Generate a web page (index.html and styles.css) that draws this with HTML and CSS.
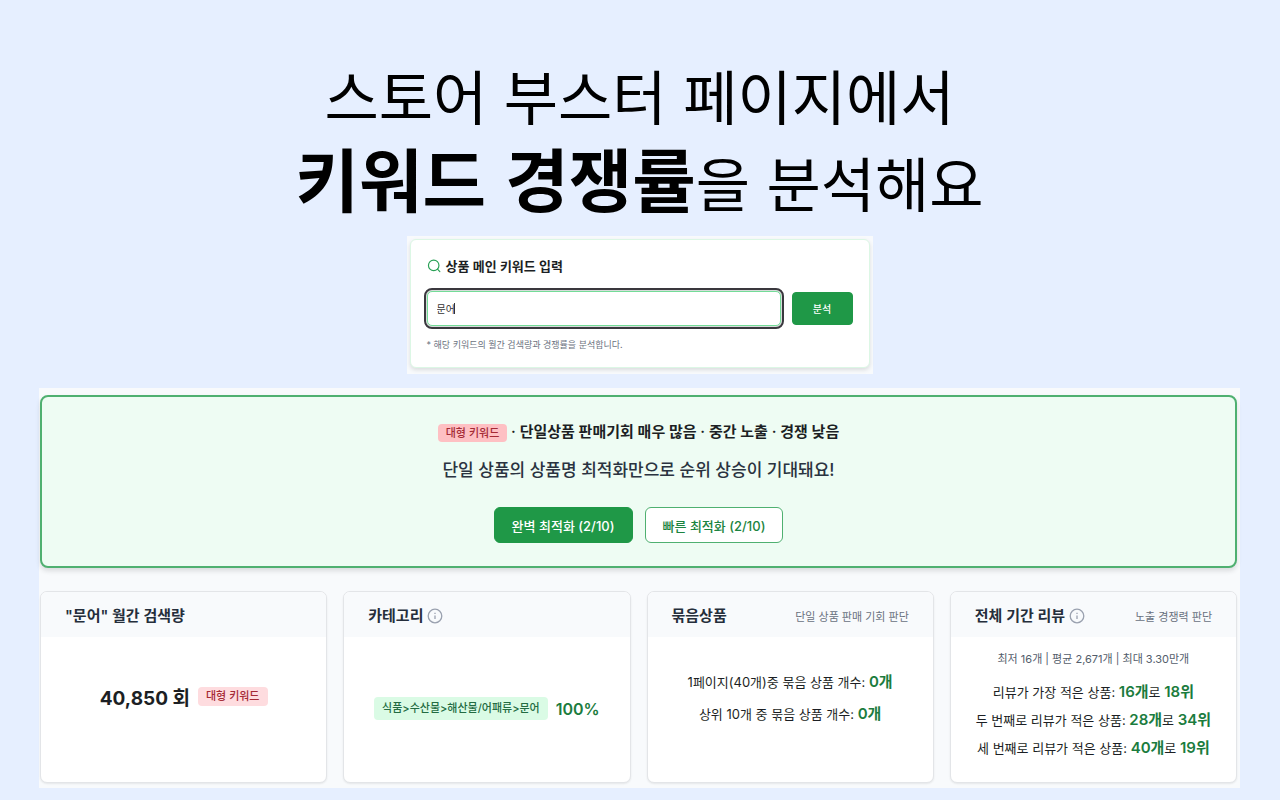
FILE: index.html
```html
<!DOCTYPE html>
<html lang="ko">
<head>
  <meta charset="UTF-8" />
  <title>스토어 부스터 - 키워드 경쟁률 분석</title>
  <meta name="viewport" content="width=device-width, initial-scale=1.0">
  <link rel="stylesheet" href="styles.css">
</head>
<body>

<h1 class="headline">스토어 부스터 페이지에서<br><strong>키워드 경쟁률</strong>을 분석해요</h1>

<div class="search-wrap">
  <form class="search-card">
    <label class="search-title" for="keyword">
      <svg class="search-icon" viewBox="0 0 24 24"><circle cx="11.5" cy="11" r="9"/><path d="M18 17.5 22 21.5"/></svg>
      상품 메인 키워드 입력
    </label>
    <div class="search-row">
      <div class="field">
        <input type="text" id="keyword" value="문어">
        <span class="caret"></span>
      </div>
      <button type="button" class="btn btn-search">분석</button>
    </div>
    <p class="hint">* 해당 키워드의 월간 검색량과 경쟁률을 분석합니다.</p>
  </form>
</div>

<main class="panel">
  <section class="summary">
    <p class="summary-title"><span class="badge badge-strong">대형 키워드</span> · 단일상품 판매기회 매우 많음 · 중간 노출 · 경쟁 낮음</p>
    <p class="summary-text">단일 상품의 상품명 최적화만으로 순위 상승이 기대돼요!</p>
    <div class="actions">
      <button type="button" class="btn">완벽 최적화 (2/10)</button>
      <button type="button" class="btn btn-outline">빠른 최적화 (2/10)</button>
    </div>
  </section>

  <div class="grid">
    <section class="card">
      <div class="card-head"><h2>"문어" 월간 검색량</h2></div>
      <div class="card-body row">
        <strong class="volume">40,850 회</strong>
        <span class="badge">대형 키워드</span>
      </div>
    </section>

    <section class="card">
      <div class="card-head">
        <h2>카테고리</h2>
        <svg class="info-icon" viewBox="0 0 16 16"><circle cx="8" cy="8" r="6.8"/><path d="M8 7.4v3.6M8 4.8v1.2"/></svg>
      </div>
      <div class="card-body row category">
        <span class="badge badge-green">식품&gt;수산물&gt;해산물/어패류&gt;문어</span>
        <strong class="percent">100%</strong>
      </div>
    </section>

    <section class="card">
      <div class="card-head">
        <h2>묶음상품</h2>
        <span class="note">단일 상품 판매 기회 판단</span>
      </div>
      <div class="card-body bundle">
        <p>1페이지(40개)중 묶음 상품 개수: <b>0개</b></p>
        <p>상위 10개 중 묶음 상품 개수: <b>0개</b></p>
      </div>
    </section>

    <section class="card">
      <div class="card-head">
        <h2>전체 기간 리뷰</h2>
        <svg class="info-icon" viewBox="0 0 16 16"><circle cx="8" cy="8" r="6.8"/><path d="M8 7.4v3.6M8 4.8v1.2"/></svg>
        <span class="note">노출 경쟁력 판단</span>
      </div>
      <div class="card-body reviews">
        <p class="stats">최저 16개 | 평균 2,671개 | 최대 3.30만개</p>
        <p>리뷰가 가장 적은 상품: <b>16개</b>로 <b>18위</b></p>
        <p>두 번째로 리뷰가 적은 상품: <b>28개</b>로 <b>34위</b></p>
        <p>세 번째로 리뷰가 적은 상품: <b>40개</b>로 <b>19위</b></p>
      </div>
    </section>
  </div>
</main>

</body>
</html>
```
FILE: styles.css
```css
* {
  box-sizing: border-box;
}

body {
  font-family: Inter, 'Noto Sans CJK KR', sans-serif;
  margin: 0;
  padding: 54px 40px 12px 39px;
  background-color: #e6efff;
  color: #1c1f24;
}

h1, h2, p {
  margin: 0;
}

button, input {
  font-family: inherit;
}

.headline {
  font-family: 'Noto Sans CJK KR', sans-serif;
  font-size: 59px;
  font-weight: 400;
  line-height: 82px;
  text-align: center;
  color: #000;
}

.headline strong {
  font-size: 69px;
  font-weight: 700;
}

/* Search */
.search-wrap {
  width: 466px;
  max-width: 100%;
  margin: 13px auto 14px;
  padding: 3px 3px 6px;
  background: #f8fafc;
}

.search-card {
  padding: 16px 16px 14px;
  background: #fff;
  border: 1px solid #dcf7e5;
  border-radius: 6px;
  box-shadow: 0 2px 4px rgba(0, 0, 0, 0.12);
}

.search-title {
  display: flex;
  align-items: center;
  gap: 5px;
  font-size: 13px;
  font-weight: 600;
  line-height: 20px;
}

.search-icon {
  width: 14px;
  height: 14px;
  fill: none;
  stroke: #28a055;
  stroke-width: 2;
  stroke-linecap: round;
}

.search-row {
  display: flex;
  align-items: center;
  gap: 11px;
  margin: 15px 0 11px;
}

.field {
  position: relative;
  flex: 1;
  min-width: 0;
}

.field input {
  display: block;
  width: 100%;
  height: 35px;
  padding: 0 9px;
  font-size: 10px;
  color: #333;
  border: 1px solid #74dc98;
  border-radius: 5px;
  box-shadow: 0 0 0 1px #d5dcd9;
  outline: 2px solid #3a383e;
  outline-offset: 1px;
}

.caret {
  position: absolute;
  top: 12px;
  left: 27px;
  width: 1px;
  height: 11px;
  background: #333;
}

.btn {
  height: 36px;
  padding: 0 17px;
  font-size: 13px;
  font-weight: 500;
  color: #fff;
  background: #1f9847;
  border: 1px solid #1f9847;
  border-radius: 6px;
  cursor: pointer;
}

.btn-search {
  width: 61px;
  height: 33px;
  font-size: 10px;
  border-radius: 4px;
}

.btn-outline {
  color: #1b8440;
  background: #fff;
  border-color: #4fb070;
}

.hint {
  font-size: 9px;
  line-height: 16px;
  color: #6b7280;
}

/* Result panel */
.panel {
  padding: 7px 3px 5px 1px;
  background: #f8fafc;
}

.summary {
  padding: 24px 0 23px;
  text-align: center;
  background: #eefcf3;
  border: 2px solid #4fb070;
  border-radius: 8px;
  box-shadow: 0 3px 5px rgba(0, 0, 0, 0.12);
}

.summary-title {
  font-size: 15px;
  font-weight: 600;
  line-height: 22px;
}

.summary-text {
  margin: 14px 0 24px;
  font-size: 17px;
  font-weight: 500;
  line-height: 26px;
  color: #2a3340;
}

.actions {
  display: flex;
  justify-content: center;
  gap: 12px;
}

.badge {
  display: inline-block;
  padding: 0 8px;
  font-size: 11px;
  font-weight: 500;
  line-height: 19px;
  color: #a52a35;
  background: #fedcdf;
  border-radius: 4px;
}

.badge-strong {
  line-height: 18px;
  background: #fec0c3;
}

.badge-green {
  line-height: 23px;
  color: #236b42;
  background: #dafbe5;
}

.grid {
  display: grid;
  grid-template-columns: repeat(4, 1fr);
  gap: 16px;
  margin-top: 23px;
}

.card {
  display: flex;
  flex-direction: column;
  min-height: 192px;
  background: #fff;
  border: 1px solid #e3e5e8;
  border-radius: 7px;
  box-shadow: 0 1px 2px rgba(0, 0, 0, 0.08);
  overflow: hidden;
}

.card-head {
  display: flex;
  align-items: center;
  gap: 4px;
  height: 45px;
  padding: 3px 24px 0;
  background: #f8fafc;
}

.card-head h2 {
  font-size: 15px;
  font-weight: 600;
  line-height: 22px;
  color: #252e3b;
}

.info-icon {
  width: 16px;
  height: 16px;
  fill: none;
  stroke: #9aa1af;
  stroke-width: 1.3;
}

.note {
  margin-left: auto;
  font-size: 11px;
  color: #69717e;
}

.card-body {
  flex: 1;
  font-size: 13px;
  text-align: center;
}

.row {
  display: flex;
  justify-content: center;
  align-items: center;
  gap: 8px;
  padding-bottom: 26px;
}

.category {
  padding-bottom: 2px;
}

.volume {
  font-size: 19px;
  font-weight: 700;
}

.percent {
  font-size: 16px;
  font-weight: 600;
  color: #1b7c3e;
}

.card-body b {
  font-size: 15px;
  font-weight: 600;
  color: #1b7c3e;
}

.bundle {
  padding-top: 29px;
  line-height: 31px;
}

.reviews {
  padding-top: 11px;
  line-height: 28px;
}

.reviews .stats {
  margin-bottom: 8px;
  font-size: 11px;
  line-height: 22px;
  color: #535d6b;
}
```
